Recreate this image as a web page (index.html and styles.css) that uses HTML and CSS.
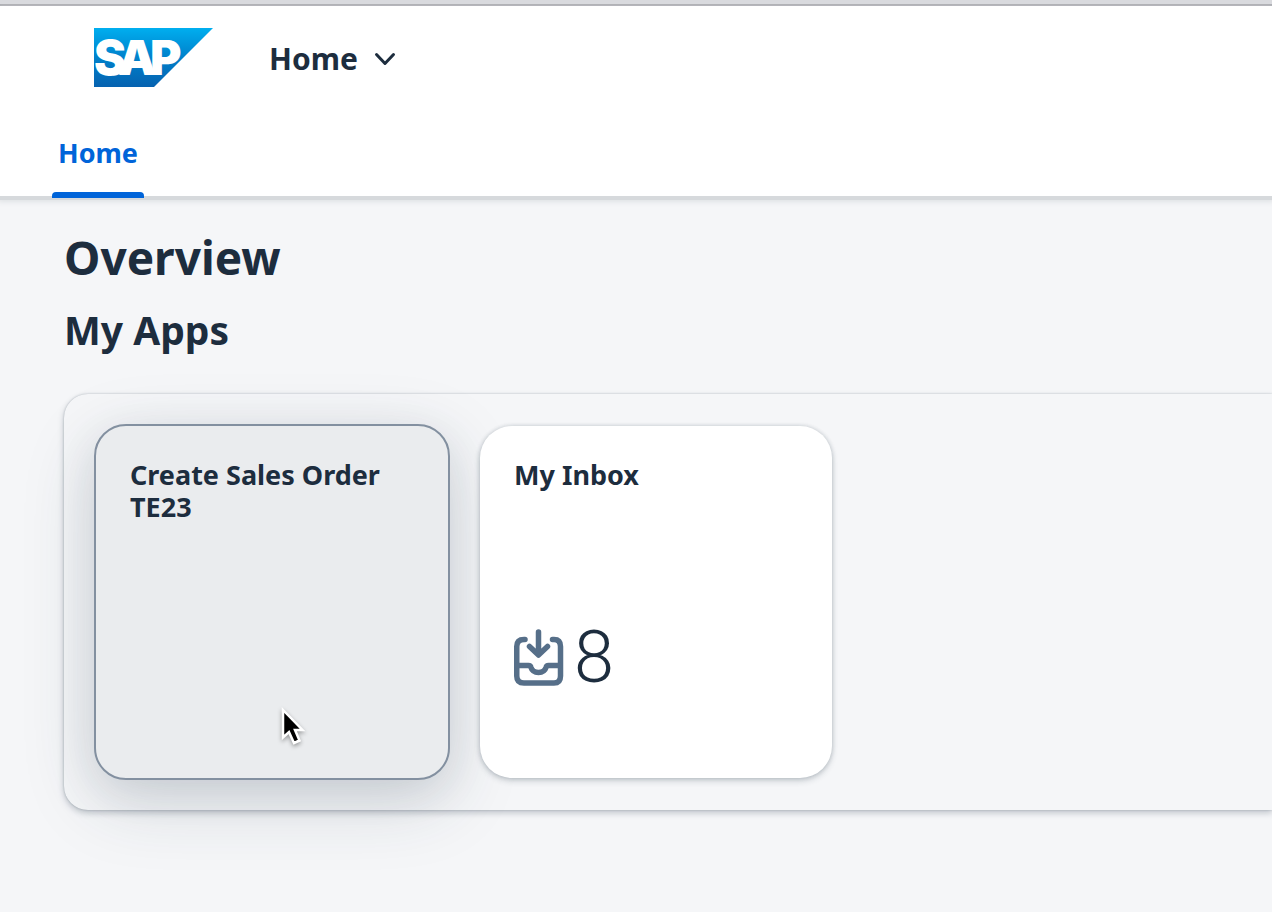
FILE: index.html
```html
<!DOCTYPE html>
<html lang="en">
<head>
<meta charset="utf-8">
<meta name="viewport" content="width=device-width, initial-scale=1">
<title>Home</title>
<link rel="stylesheet" href="styles.css">
</head>
<body>
<div class="window-edge"></div>
<header class="shell">
  <div class="shell-bar">
    <a class="logo" href="#" aria-label="SAP">
      <svg width="119" height="59" viewBox="0 0 119 59">
        <defs>
          <linearGradient id="logo-fill" x1="0" y1="0" x2="0" y2="1">
            <stop offset="0" stop-color="#00aeef"/>
            <stop offset="0.5" stop-color="#0081cb"/>
            <stop offset="1" stop-color="#0662b0"/>
          </linearGradient>
        </defs>
        <path d="M0 0H119L60 59H0Z" fill="url(#logo-fill)"/>
        <text class="logo-text" x="0 24 56" y="47">SAP</text>
      </svg>
    </a>
    <button class="title-menu" type="button">Home
      <svg width="22" height="16" viewBox="0 0 22 16" fill="none" stroke="currentColor" stroke-width="3" stroke-linecap="round" stroke-linejoin="round"><path d="M2.500 3.500L11 12.500L19.500 3.500"/></svg>
    </button>
  </div>
  <nav class="tabs"><a class="tab" href="#">Home</a></nav>
</header>
<main class="page">
  <h1 class="page-title">Overview</h1>
  <h2 class="section-title">My Apps</h2>
  <section class="tiles">
    <a class="tile tile-hover" href="#">
      <span class="tile-title">Create Sales Order TE23</span>
      <svg class="cursor" width="30" height="42" viewBox="0 0 30 42"><path d="M3 4V31.500L9 26L14 37L19.500 34.500L15 24H22.500Z" fill="#000" stroke="#fff" stroke-width="2.500"/></svg>
    </a>
    <a class="tile" href="#">
      <span class="tile-title">My Inbox</span>
      <span class="tile-kpi">
        <svg width="50" height="58" viewBox="0 0 50 58" fill="none" stroke="#566f89" stroke-width="5.500" stroke-linecap="round" stroke-linejoin="round">
          <path d="M11 10.500H10Q2.750 10.500 2.750 17.500V47Q2.750 54 10 54H40Q46.500 54 46.500 47V17.500Q46.500 10.500 40 10.500H38.500"/>
          <path d="M24.500 3V25M15.500 17.500L24.500 26L33.500 17.500"/>
          <path d="M3 36.500H14.500Q16.500 36.500 17 38.500C19 45 30 45 32 38.500Q32.500 36.500 34.500 36.500H46"/>
        </svg>
        <span class="kpi-value">8</span>
      </span>
    </a>
  </section>
</main>
</body>
</html>
```
FILE: styles.css
```css
* { box-sizing: border-box; }
body {
  margin: 0;
  min-height: 100vh;
  overflow-x: hidden;
  background: #f5f6f8;
  color: #1d2d3e;
  font-family: "Noto Sans", "Open Sans", sans-serif;
  font-weight: 700;
}
a { color: inherit; text-decoration: none; }
svg { display: block; flex: none; }
.window-edge {
  height: 6px;
  background: #d9dade;
  border-bottom: 2px solid #acadb2;
}
.shell {
  background: #fff;
  box-shadow: 0 4px 0 #d6d9dc, 0 4px 5px 2px #dfe2e5;
}
.shell-bar {
  display: flex;
  align-items: center;
  gap: 56px;
  height: 102px;
  padding-left: 94px;
}
.logo-text {
  fill: #fff;
  font: 900 48px Inter, sans-serif;
}
.title-menu {
  display: flex;
  align-items: center;
  gap: 16px;
  padding: 4px 0 0;
  border: 0;
  background: none;
  color: inherit;
  font: 700 30px/40px "Noto Sans", sans-serif;
}
.tabs {
  display: flex;
  height: 88px;
  padding-left: 52px;
}
.tab {
  position: relative;
  padding: 25px 6px;
  color: #0064d9;
  font-size: 27px;
  line-height: 40px;
}
.tab::after {
  content: "";
  position: absolute;
  left: 0;
  right: 0;
  bottom: -2px;
  height: 6px;
  border-radius: 4px 4px 0 0;
  background: #0064d9;
}
.page { padding: 32px 0 32px 64px; }
.page-title {
  margin: 0;
  font-size: 46px;
  line-height: 58px;
}
.section-title {
  margin: 18px 0 38px;
  font-size: 39px;
  line-height: 52px;
}
.tiles {
  display: flex;
  gap: 30px;
  padding: 30px;
  border-radius: 24px 0 0 24px;
  box-shadow: 0 0 2px rgba(34, 53, 72, .3), 0 3px 6px rgba(34, 53, 72, .25);
  background: #f5f6f8;
}
.tile {
  display: flex;
  flex-direction: column;
  position: relative;
  width: 352px;
  height: 352px;
  margin: 2px 0;
  padding: 33px 34px;
  border-radius: 32px;
  background: #fff;
  box-shadow: 0 0 4px rgba(34, 53, 72, .2), 0 3px 6px rgba(34, 53, 72, .2);
}
.tile-hover {
  width: 356px;
  height: 356px;
  margin: 0;
  border: 2px solid #8390a0;
  background: #eaecee;
  box-shadow: 0 20px 72px rgba(34, 53, 72, .18), 0 12px 40px rgba(34, 53, 72, .08);
}
.tile-title {
  font-size: 27px;
  line-height: 32px;
}
.tile-kpi {
  display: flex;
  align-items: center;
  gap: 10px;
  margin: auto 0 51px;
}
.kpi-value {
  font-family: Roboto, sans-serif;
  font-size: 72px;
  font-weight: 300;
  line-height: 72px;
}
.cursor {
  position: absolute;
  left: 184px;
  top: 280px;
  filter: drop-shadow(0 2px 2px rgba(0, 0, 0, .35));
}
```
